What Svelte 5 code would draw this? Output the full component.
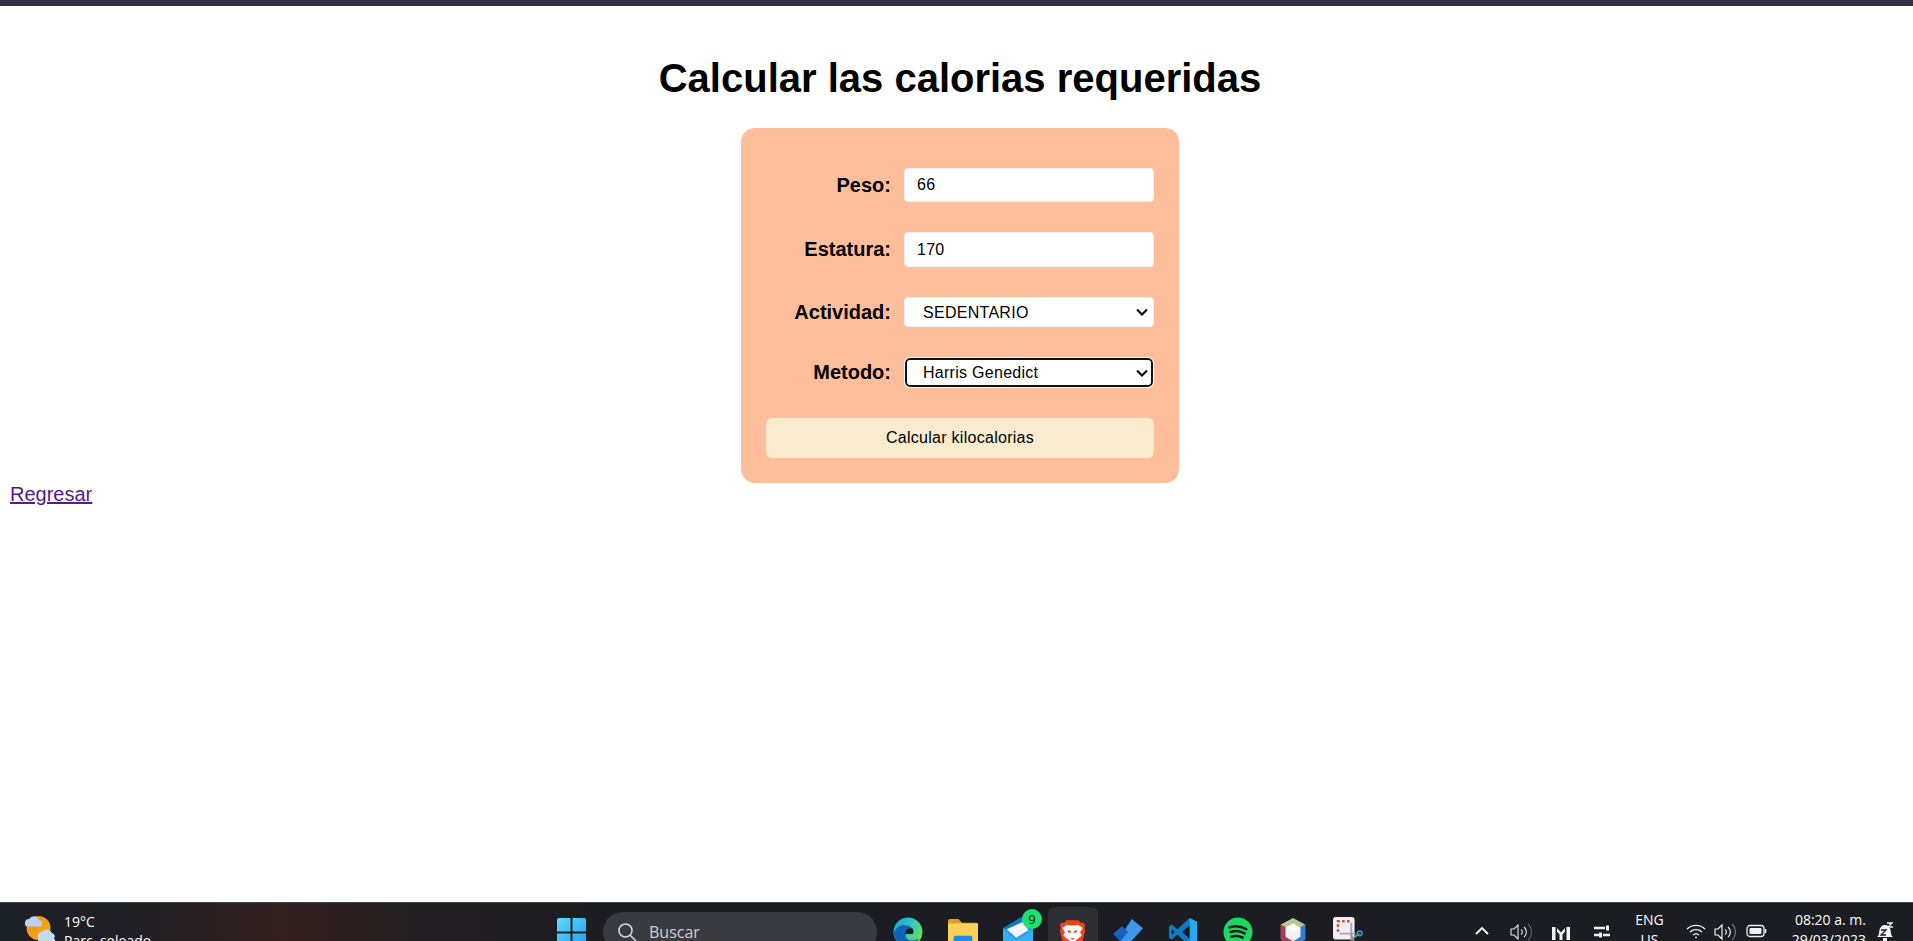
<script lang="ts">
	const actividades = ['SEDENTARIO', 'LIGERO', 'MODERADO', 'INTENSO'];
	const metodos = ['Harris Genedict', 'Mifflin St Jeor'];
</script>

<div class="screen">
	<div class="browser-edge"></div>

	<main class="page">
		<h1>Calcular las calorias requeridas</h1>
		<form class="card">
			<label for="peso">Peso:</label>
			<input id="peso" type="text" value="66" />

			<label for="estatura">Estatura:</label>
			<input id="estatura" type="text" value="170" />

			<label for="actividad">Actividad:</label>
			<select id="actividad">
				{#each actividades as a}
					<option>{a}</option>
				{/each}
			</select>

			<label for="metodo">Metodo:</label>
			<select id="metodo" class="focused">
				{#each metodos as m}
					<option>{m}</option>
				{/each}
			</select>

			<button type="button">Calcular kilocalorias</button>
		</form>
		<a class="back" href="#regresar">Regresar</a>
	</main>

	<footer class="taskbar">
		<div class="weather">
			<svg viewBox="0 0 32 32" width="32" height="32">
				<defs>
					<linearGradient id="sun" x1="0" y1="0" x2="1" y2="1">
						<stop offset="0" stop-color="#f0890f" />
						<stop offset="1" stop-color="#fbb21e" />
					</linearGradient>
				</defs>
				<circle cx="14.500" cy="13" r="12" fill="url(#sun)" />
				<path d="M1 8a4 4 0 0 1 4-4 6 6 0 0 1 10.500 1 3.500 3.500 0 0 1 1 6.500H3a3 3 0 0 1-2-3.500Z" fill="#bcd2f0" />
				<path d="M14 21a4 4 0 0 1 4-4 6 6 0 0 1 10 1 3.500 3.500 0 0 1 1 6.500H16a3 3 0 0 1-2-3.500Z" fill="#c6d9f2" />
				<path d="M14 24h17v8H14Z" fill="#c6d9f2" />
			</svg>
			<div class="weather-text">
				<span>19°C</span>
				<span>Parc. soleado</span>
			</div>
		</div>

		<div class="center">
			<svg class="start" viewBox="0 0 29 29" width="29" height="29">
				<defs>
					<linearGradient id="win" x1="0" y1="0" x2="1" y2="1">
						<stop offset="0" stop-color="#5fdcff" />
						<stop offset="1" stop-color="#1f9ef0" />
					</linearGradient>
				</defs>
				<path d="M0 2a2 2 0 0 1 2-2h11.500v13.500H0ZM15.500 0H27a2 2 0 0 1 2 2v11.500H15.500ZM0 15.500h13.500V29H2a2 2 0 0 1-2-2ZM15.500 15.500H29V27a2 2 0 0 1-2 2H15.500Z" fill="url(#win)" />
			</svg>

			<div class="search">
				<svg viewBox="0 0 20 20" width="20" height="20" fill="none" stroke="#d6d6d8" stroke-width="1.600">
					<circle cx="8.500" cy="8.500" r="6.500" />
					<path d="m13.500 13.500 5 5" stroke-linecap="round" />
				</svg>
				<span>Buscar</span>
			</div>

			<div class="apps">
				<div class="app">
					<svg viewBox="0 0 32 32">
						<defs>
							<linearGradient id="edge" x1="0" y1="0" x2="1" y2="0.600">
								<stop offset="0" stop-color="#1b9de2" />
								<stop offset="0.550" stop-color="#33c6c0" />
								<stop offset="1" stop-color="#6fdc4f" />
							</linearGradient>
						</defs>
						<circle cx="16" cy="16" r="15.500" fill="url(#edge)" />
						<path d="M1 17C3 9 12 7 18 10c4 2 5 6 3 8h-7c-2 3 1 7 6 7 3 0 6-1 8-2-3 5-7 8-12 8C8 31 1 25 1 17Z" fill="#0f63b4" />
						<path d="M13 17c0-3 3-5 6-5 3 .5 3 4 2 6h-7Z" fill="#1a1c22" />
					</svg>
				</div>
				<div class="app">
					<svg viewBox="0 0 32 32">
						<path d="M0 4a2 2 0 0 1 2-2h9l4 4h15a2 2 0 0 1 2 2v3H0Z" fill="#d9a21f" />
						<path d="M0 7h32v23a2 2 0 0 1-2 2H2a2 2 0 0 1-2-2Z" fill="#fdd05a" />
						<rect x="6" y="20" width="20" height="12" rx="2" fill="#1f8fe0" />
					</svg>
				</div>
				<div class="app">
					<svg viewBox="0 0 32 32">
						<path d="M0 12 20 0l12 12v20H0Z" fill="#1f9bea" />
						<path d="M0 12 20 0v5L4 13Z" fill="#0f74c6" />
						<path d="M4 13 22 5l5 9-13 8Z" fill="#f2f6fa" />
						<path d="M0 13 14 24l18-11v19H0Z" fill="#35aef2" />
					</svg>
					<span class="badge">9</span>
				</div>
				<div class="app current">
					<svg class="brave" viewBox="0 0 32 32">
						<path d="M9 1h14l3 3 3-.5L31 7l-1 3 1 3-4 16-8 3h-6l-8-3L1 13l1-3-1-3 2-3.500L6 4Z" fill="#f1441d" />
						<path d="M16 7c-3 0-6-1-8 0l-4 3 3 5-2 4 6 5 5 4 5-4 6-5-2-4 3-5-4-3c-2-1-5 0-8 0Z" fill="#fff" />
						<path d="M10 13h3.500l1 3-3.500-.5ZM22 13h-3.500l-1 3 3.500-.5ZM13.500 22h5l-2.500 2Z" fill="#f1441d" />
					</svg>
				</div>
				<div class="app">
					<svg viewBox="0 0 32 32">
						<path d="M20 2 32 12 14 32 6 24Z" fill="#3d97ea" />
						<path d="M0 18 9.600 9.600 16 16 8 26Z" fill="#1b5fc0" />
					</svg>
				</div>
				<div class="app">
					<svg viewBox="0 0 32 32">
						<path d="M23 1 31 5v22l-8 4L10 19l-6 5-3-2v-12l3-2 6 5Z" fill="#0c7cc4" />
						<path d="M23 1 31 5v22l-8 4Z" fill="#27a9f0" />
						<path d="m23 9-8 7 8 7Z" fill="#1a1c22" />
						<path d="M4 13v6l3-3Z" fill="#1a1c22" />
					</svg>
				</div>
				<div class="app">
					<svg viewBox="0 0 32 32" fill="none">
						<circle cx="16" cy="16" r="15.500" fill="#1ed760" />
						<path d="M7 11c6-2 13-1 18 2M8 16c5-1.500 11-1 15 1.500M9 21c4-1 9-.7 12 1" stroke="#17191e" stroke-width="2.600" stroke-linecap="round" />
					</svg>
				</div>
				<div class="app">
					<svg viewBox="0 0 32 32">
						<path d="M16 1 29 8v16l-13 7-13-7V8Z" fill="#b8c98f" />
						<path d="M3 8l13 7v16L3 24Z" fill="#a53a63" />
						<path d="M29 8l-13 7v16l13-7Z" fill="#2f7fd0" />
						<path d="m16 7 8 4.500v9.500L16 26l-8-5v-9.500Z" fill="#f4f2e8" />
						<path d="m16 7 8 4.500-8 4.500-8-4.500Z" fill="#fff" />
					</svg>
				</div>
				<div class="app">
					<svg viewBox="0 0 32 32" fill="none">
						<rect x="0" y="0" width="23" height="24" rx="3" fill="#f0f0f2" />
						<path d="M5.300 15.600V4.500h14" stroke="#d8431f" stroke-width="2.600" stroke-dasharray="2.600 2.600" />
						<path d="M19.500 6v19M7 17.700h17" stroke="#a4a8ae" stroke-width="2" />
						<path d="M19 18l4 9M28 18l-9 6" stroke="#8f96a0" stroke-width="1.800" />
						<circle cx="28.500" cy="17.500" r="2.400" stroke="#2b9be8" stroke-width="1.700" />
					</svg>
				</div>
			</div>
		</div>

		<div class="tray">
			<svg viewBox="0 0 16 16" width="16" height="16" fill="none" stroke="#fff" stroke-width="1.800"><path d="m2 11 6-6 6 6" /></svg>
			<svg class="gap-a" viewBox="0 0 22 20" width="22" height="20" fill="none" stroke="#e8e8e8" stroke-width="1.100"><path d="M1 7h3l4-4v14l-4-4H1ZM11 7.500a3 3 0 0 1 0 5M14 5a6.500 6.500 0 0 1 0 10" /><path d="M18 2a11 11 0 0 1 0 16" stroke="#666" /></svg>
			<svg class="gap-b" viewBox="0 0 18 16" width="18" height="16" fill="#f2f2f2"><path d="M0 3h3.500v13H0ZM14.500 3H18v13h-3.500ZM5 4l4 4.500L13 4v3.500L10.500 10.500V16h-3v-5.500L5 7.500Z" /></svg>
			<svg class="gap-c" viewBox="0 0 18 16" width="18" height="16" fill="none" stroke="#f2f2f2" stroke-width="2.400"><path d="M1 5h11M1 12h5M10 12h7" /><rect x="13" y="2.500" width="3" height="5" fill="#f2f2f2" stroke="none" /><rect x="6" y="9.500" width="3" height="5" fill="#f2f2f2" stroke="none" /></svg>
			<div class="lang">
				<span>ENG</span>
				<span>US</span>
			</div>
			<svg class="gap-d" viewBox="0 0 20 16" width="20" height="16" fill="none" stroke="#f2f2f2" stroke-width="1.300"><path d="M1 6a13 13 0 0 1 18 0M4 9a9 9 0 0 1 12 0M7 12a5 5 0 0 1 6 0" /><circle cx="10" cy="14.500" r="1" fill="#f2f2f2" stroke="none" /></svg>
			<svg class="gap-e" viewBox="0 0 22 20" width="22" height="20" fill="none" stroke="#f2f2f2" stroke-width="1.200"><path d="M1 7h3l4-4v14l-4-4H1ZM11 7.500a3 3 0 0 1 0 5M14 5a6.500 6.500 0 0 1 0 10" /><path d="M18 2a11 11 0 0 1 0 16" stroke="#777" /></svg>
			<svg class="gap-f" viewBox="0 0 22 14" width="22" height="14" fill="none"><rect x="1" y="1.500" width="17" height="11" rx="3" stroke="#f2f2f2" stroke-width="1.300" /><rect x="3.500" y="4" width="12" height="6" rx="1" fill="#f2f2f2" /><path d="M19.500 5v4" stroke="#f2f2f2" stroke-width="1.600" /></svg>
			<div class="clock">
				<span>08:20 a. m.</span>
				<span>29/03/2023</span>
			</div>
			<svg class="notif" viewBox="0 0 20 20" width="20" height="20" fill="none"><path d="M2 16c2-1 2-4 2.500-7S7 4 10 4s5 2 5.500 5 .5 6 2.500 7Z" fill="#f4f4f4" /><path d="M8 17h4v3H8Z" fill="#f4f4f4" /><path d="M6 9h5l-5 5h5" stroke="#1c1d22" stroke-width="1.300" /><path d="M12 2h5l-4 4h5" stroke="#f4f4f4" stroke-width="1.300" /></svg>
		</div>
	</footer>
</div>

<style>
	:global(body) {
		margin: 0;
		background: #fff;
		overflow: hidden;
	}

	.screen {
		display: flex;
		flex-direction: column;
		height: 941px;
		overflow: hidden;
		font-family: 'Liberation Sans', Arial, sans-serif;
	}

	.browser-edge {
		flex: 0 0 6px;
		background: #2f3241;
	}

	.page {
		flex: 1 1 auto;
		width: 1920px;
		min-height: 0;
		display: flex;
		flex-direction: column;
		align-items: center;
	}

	h1 {
		margin: 49px 0 27px;
		font-size: 40px;
		line-height: 46px;
		font-weight: 700;
		color: #000;
	}

	.card {
		width: 438px;
		box-sizing: border-box;
		padding: 40px 25px 25px;
		display: grid;
		grid-template-columns: 125px 250px;
		column-gap: 13px;
		row-gap: 30px;
		align-items: center;
		background: #ffbe9b;
		border-radius: 14px;
	}

	label {
		font-size: 20px;
		font-weight: 700;
		text-align: right;
		color: #000;
	}

	input,
	select {
		box-sizing: border-box;
		width: 250px;
		border: 1px solid #f3f0ee;
		border-radius: 4px;
		background-color: #fff;
		color: #000;
		font-family: inherit;
		font-size: 16px;
		letter-spacing: 0.28px;
		margin: 0;
	}

	input {
		height: 34px;
		padding: 0 12px;
	}

	#estatura {
		height: 35px;
	}

	select {
		appearance: none;
		height: 30px;
		padding: 0 18px;
		background-image: url("data:image/svg+xml,%3Csvg xmlns='http://www.w3.org/2000/svg' width='12' height='8' fill='none'%3E%3Cpath d='M1 1.500 6 6.500 11 1.500' stroke='%23111' stroke-width='2.200'/%3E%3C/svg%3E");
		background-repeat: no-repeat;
		background-position: right 5px center;
	}

	select.focused {
		width: 248px;
		height: 29px;
		margin: 1px;
		padding: 0 16px;
		border: 2px solid #111;
		border-radius: 5px;
		outline: 1px solid #fff;
		background-position: right 3px center;
	}

	button {
		grid-column: 1 / -1;
		height: 40px;
		border: 0;
		border-radius: 6px;
		background: #f9ebcd;
		color: #000;
		font-family: inherit;
		font-size: 16px;
		letter-spacing: 0.28px;
	}

	.back {
		align-self: flex-start;
		margin-left: 10px;
		font-size: 20px;
		color: #551a8b;
	}

	.taskbar {
		flex: 0 0 39px;
		position: relative;
		display: flex;
		align-items: flex-start;
		justify-content: space-between;
		overflow: hidden;
		background: linear-gradient(90deg, #1c2027 0, #1f2026 130px, #33201f 280px, #231f22 420px, #1c1d22 600px);
		border-top: 1px solid #45474c;
		box-sizing: border-box;
		color: #fff;
		font-family: 'Open Sans', 'Noto Sans', sans-serif;
	}

	.weather {
		display: flex;
		gap: 8px;
		padding: 12px 0 0 24px;
	}

	.weather-text {
		display: flex;
		flex-direction: column;
		font-size: 14px;
		line-height: 19px;
		margin-top: -3px;
	}

	.center {
		position: absolute;
		left: 557px;
		top: 0;
		display: flex;
		align-items: flex-start;
	}

	.start {
		margin-top: 15px;
	}

	.search {
		width: 274px;
		height: 40px;
		margin: 9px 0 0 17px;
		display: flex;
		align-items: center;
		gap: 12px;
		padding-left: 14px;
		box-sizing: border-box;
		border-radius: 20px;
		background: #3a3b40;
		color: #d0d0d2;
		font-size: 16px;
	}

	.apps {
		display: flex;
		margin-left: 3px;
	}

	.app {
		position: relative;
		width: 55px;
		height: 44px;
		display: flex;
		justify-content: center;
		padding-top: 14px;
		box-sizing: border-box;
	}

	.app svg {
		width: 30px;
		height: 30px;
	}

	.app svg.brave {
		width: 27px;
		height: 30px;
	}

	.app.current {
		width: 50px;
		margin: 4px 2.5px 0;
		padding-top: 11px;
		border-radius: 6px 6px 0 0;
		background: #2c2e33;
	}

	.badge {
		position: absolute;
		top: 6px;
		right: 3px;
		width: 20px;
		height: 20px;
		border-radius: 50%;
		background: #1ee06d;
		color: #10161a;
		font-size: 13px;
		line-height: 20px;
		text-align: center;
	}

	.tray {
		display: flex;
		align-items: flex-start;
		padding-right: 18px;
	}

	.tray > svg {
		margin-top: 20px;
	}

	.tray > .gap-a { margin-left: 20px; margin-top: 19px; }
	.tray > .gap-b { margin-left: 20px; margin-top: 21px; }
	.tray > .gap-c { margin-left: 23px; }
	.tray > .gap-d { margin-left: 22px; }
	.tray > .gap-e { margin-left: 8px; margin-top: 19px; }
	.tray > .gap-f { margin-left: 10px; margin-top: 21px; }

	.lang {
		display: flex;
		flex-direction: column;
		align-items: center;
		margin-left: 24px;
		margin-top: 7px;
		font-size: 14px;
		line-height: 20px;
	}

	.clock {
		display: flex;
		flex-direction: column;
		align-items: flex-end;
		margin-left: 24px;
		margin-top: 7px;
		font-size: 14px;
		line-height: 20px;
	}

	.tray > .notif {
		margin-left: 9px;
		margin-top: 18px;
	}
</style>
